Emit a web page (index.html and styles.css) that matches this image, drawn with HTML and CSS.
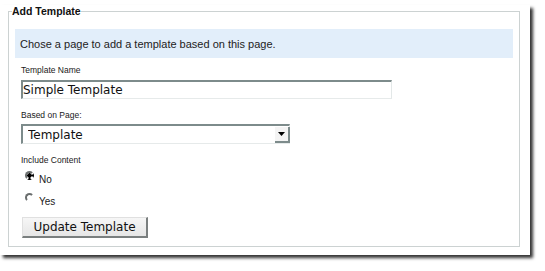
FILE: index.html
```html
<html>

<head>
    <title>Add Template</title>

    <link rel="stylesheet" href="styles.css">

</head>

<body>

    <div class="shot">
        <fieldset class="panel">
            <legend>Add Template</legend>

            <p class="hint">Chose a page to add a template based on this page.</p>

            <div class="form">
                <label class="cap" for="name">Template Name</label>
                <input class="field text" id="name" type="text" value="Simple Template">

                <label class="cap" for="page">Based on Page:</label>
                <div class="pick">
                    <select class="field select" id="page">
                        <option>Template</option>
                    </select>
                    <span class="arrow">
                        <svg width="7" height="4" viewBox="0 0 7 4"><path d="M0 0h7L3.5 4z" fill="#000"/></svg>
                    </span>
                </div>

                <span class="cap gap">Include Content</span>
                <label class="opt"><input type="radio" name="content" checked> No</label>
                <label class="opt"><input type="radio" name="content"> Yes</label>

                <button class="btn">Update Template</button>
            </div>
        </fieldset>
    </div>

</body>

</html>
```

FILE: styles.css
```css
body {
    margin: 0;
    background: #fff;
    font-family: "Liberation Sans", Arial, sans-serif;
    color: #1a1a1a;
}

.shot {
    width: 530px;
    height: 250px;
    box-sizing: border-box;
    padding: 0 10px 0 8px;
    background: #fff;
    box-shadow: 3px 3px 3px rgba(0, 0, 0, 0.8);
}

.panel {
    margin: 5px 0 0 0;
    padding: 12px 6px 8px 6px;
    border: 1px solid #ccd2d2;
    min-width: 0;
}

.panel legend {
    padding: 0;
    margin-left: -3px;
    font-size: 10.5px;
    font-weight: bold;
    line-height: 12px;
    color: #111;
}

.hint {
    margin: 0;
    height: 29px;
    padding: 0 5px;
    background: #e2eefa;
    font-size: 11px;
    line-height: 31px;
    color: #222;
}

.form {
    display: flex;
    flex-direction: column;
    align-items: flex-start;
    padding-left: 6px;
}

.cap {
    margin-top: 6px;
    font-size: 8.5px;
    line-height: 12px;
}

.cap.gap,
.pick + .cap,
.text + .cap {
    margin-top: 10px;
}

.field {
    box-sizing: border-box;
    margin: 0;
    font-family: "DejaVu Sans", Verdana, sans-serif;
    font-size: 12px;
    color: #111;
    background: #fff;
    border-style: solid;
    border-width: 2px 1px 1px 2px;
    border-color: #7d8b8b #e3e8e8 #e6eaea #7d8b8b;
    border-radius: 0;
    outline: none;
}

.text {
    margin-top: 4px;
    width: 371px;
    height: 19px;
    padding: 0;
}

.pick {
    position: relative;
    margin-top: 3px;
}

.select {
    -webkit-appearance: none;
    appearance: none;
    width: 269px;
    height: 20px;
    padding: 0 0 0 5px;
}

.arrow {
    position: absolute;
    right: 0;
    top: 3px;
    width: 15px;
    height: 16px;
    box-sizing: border-box;
    background: #f4f4f4;
    border-right: 2px solid #7d8b8b;
    border-bottom: 2px solid #7d8b8b;
    display: flex;
    align-items: center;
    justify-content: center;
    pointer-events: none;
}

.opt {
    display: flex;
    align-items: flex-start;
    gap: 5px;
    margin: 8px 0 0 4px;
    font-size: 10px;
    line-height: 14px;
}

.cap + .opt {
    margin-top: 7px;
}

.opt input {
    -webkit-appearance: none;
    appearance: none;
    box-sizing: border-box;
    width: 9px;
    height: 9px;
    margin: -2px 0 0 0;
    border-radius: 50%;
    border: 2px solid transparent;
    border-top-color: #6a6e6e;
    border-left-color: #6a6e6e;
    background: #fff;
}

.opt input:checked {
    background: radial-gradient(circle, #000 0 2px, #fff 2.5px);
}

.btn {
    margin: 8px 0 0 1px;
    width: 126px;
    height: 21px;
    padding: 0 0 0 0;
    font-family: "DejaVu Sans", Verdana, sans-serif;
    font-size: 12px;
    color: #111;
    background: linear-gradient(#f6f6f6, #e6e6e6);
    border-style: solid;
    border-width: 1px 2px 2px 1px;
    border-color: #e0e0e0 #7a7f7f #7a7f7f #e0e0e0;
    border-radius: 0;
}
```
